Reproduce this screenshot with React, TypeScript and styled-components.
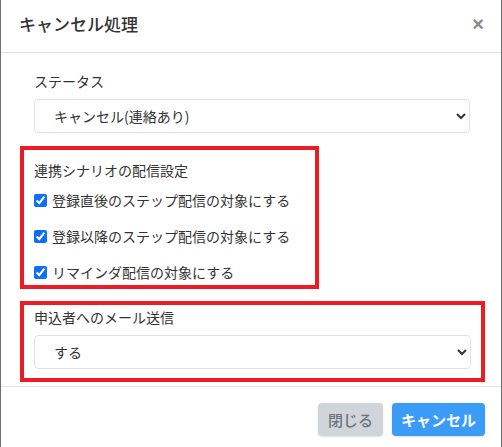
import React from "react";
import styled, { createGlobalStyle } from "styled-components";

const Global = createGlobalStyle`
  html, body { margin: 0; padding: 0; }
  body {
    background: #6b6e78;
    font-family: "Noto Sans CJK JP", "Noto Sans", sans-serif;
    color: #333;
  }
`;

const Modal = styled.div`
  width: 500px;
  height: 447px;
  margin-left: 1px;
  background: #fff;
  display: flex;
  flex-direction: column;
  overflow: hidden;
`;

const Header = styled.div`
  height: 53px;
  border-bottom: 1px solid #dee2e6;
  padding: 0 17px 4px 18px;
  box-sizing: border-box;
  display: flex;
  align-items: center;
  justify-content: space-between;
`;

const Title = styled.h2`
  margin: 0;
  font-size: 17px;
  font-weight: 500;
  color: #333;
  line-height: 24px;
`;

const Close = styled.button`
  border: 0;
  background: none;
  padding: 0;
  font-family: "Liberation Sans", sans-serif;
  font-size: 20px;
  font-weight: 700;
  color: #8a8a8a;
  line-height: 1;
  cursor: pointer;
`;

const Body = styled.div`
  padding: 18px 16px 4px 19px;
  display: flex;
  flex-direction: column;
  align-items: flex-start;
`;

const StatusField = styled.div`
  align-self: stretch;
  padding: 0 15px 0 14px;
  display: flex;
  flex-direction: column;
  gap: 8px;
`;

const Label = styled.div`
  font-size: 14px;
  line-height: 20px;
  color: #333;
`;

const Select = styled.select`
  height: 34px;
  width: 100%;
  border: 1px solid #dee2e6;
  border-radius: 4px;
  background-color: #fff;
  padding: 0 8px 0 15px;
  font-family: "Noto Sans CJK JP", "Noto Sans", sans-serif;
  font-size: 14px;
  color: #333;
  outline: none;
`;

const Highlight = styled.div<{ $width?: number; $mt: number; $pt: number; $pb: number; $gap: number }>`
  box-sizing: border-box;
  ${(p) => (p.$width ? `width: ${p.$width}px;` : "align-self: stretch;")}
  margin-top: ${(p) => p.$mt}px;
  border: 4px solid #ed1c24;
  padding: ${(p) => p.$pt}px 10px ${(p) => p.$pb}px 10px;
  display: flex;
  flex-direction: column;
  gap: ${(p) => p.$gap}px;
`;

const Rows = styled.div`
  display: flex;
  flex-direction: column;
  gap: 16px;
`;

const CheckRow = styled.label`
  display: flex;
  align-items: center;
  gap: 5px;
  height: 20px;
  font-size: 14px;
  color: #333;
`;

const Check = styled.input`
  margin: 0;
  width: 13px;
  height: 13px;
  accent-color: #0d6efd;
`;

const Footer = styled.div`
  border-top: 1px solid #dee2e6;
  padding: 16px 16px 0 0;
  display: flex;
  justify-content: flex-end;
  gap: 9px;
`;

const Button = styled.button<{ $primary?: boolean }>`
  height: 33px;
  border: 0;
  border-radius: 4px;
  padding: 0 ${(p) => (p.$primary ? 9 : 10)}px;
  font-family: "Noto Sans CJK JP", "Noto Sans", sans-serif;
  font-size: 15px;
  font-weight: ${(p) => (p.$primary ? 700 : 500)};
  background: ${(p) => (p.$primary ? "#3a9cf6" : "#d0d4db")};
  color: ${(p) => (p.$primary ? "#fff" : "#6c737d")};
  box-shadow: 0 1px 2px rgba(0, 0, 0, 0.12);
  cursor: pointer;
`;

const checks = [
  "登録直後のステップ配信の対象にする",
  "登録以降のステップ配信の対象にする",
  "リマインダ配信の対象にする",
];

export default function App() {
  return (
    <>
      <Global />
      <Modal>
        <Header>
          <Title>キャンセル処理</Title>
          <Close aria-label="close">×</Close>
        </Header>
        <Body>
          <StatusField>
            <Label>ステータス</Label>
            <Select defaultValue="cancel">
              <option value="cancel">キャンセル(連絡あり)</option>
            </Select>
          </StatusField>
          <Highlight $width={299} $mt={13} $pt={10} $pb={3} $gap={10}>
            <Label>連携シナリオの配信設定</Label>
            <Rows>
              {checks.map((c) => (
                <CheckRow key={c}>
                  <Check type="checkbox" defaultChecked />
                  {c}
                </CheckRow>
              ))}
            </Rows>
          </Highlight>
          <Highlight $mt={12} $pt={2} $pb={9} $gap={8}>
            <Label>申込者へのメール送信</Label>
            <Select defaultValue="yes">
              <option value="yes">する</option>
            </Select>
          </Highlight>
        </Body>
        <Footer>
          <Button>閉じる</Button>
          <Button $primary>キャンセル</Button>
        </Footer>
      </Modal>
    </>
  );
}
